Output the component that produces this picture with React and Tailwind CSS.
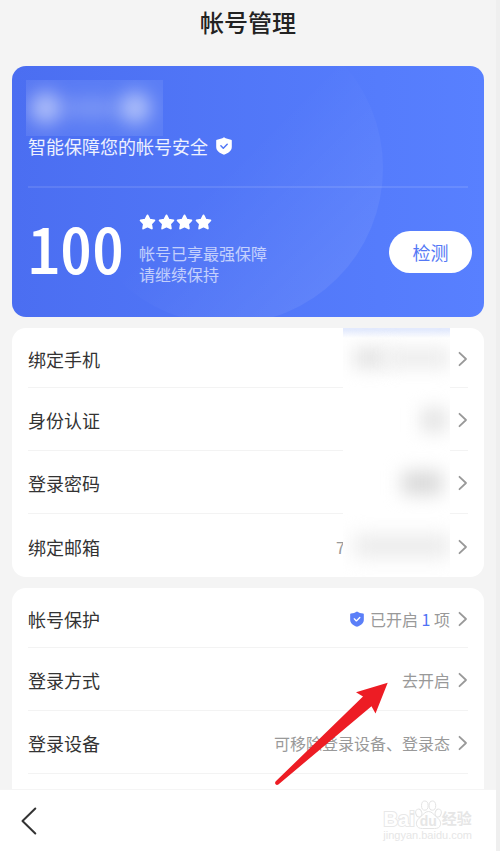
import React from "react";

const ChevronRight = () => (
  <svg viewBox="0 0 10 16" className="h-4 w-2.5 shrink-0" fill="none" aria-hidden="true">
    <path
      d="M1.5 1.8 8 8l-6.5 6.2"
      stroke="#999999"
      strokeWidth="1.8"
      strokeLinecap="round"
      strokeLinejoin="round"
    />
  </svg>
);

const Shield = ({ className, fill, check }) => (
  <svg viewBox="0 0 16 18" className={className} aria-hidden="true">
    <path
      d="M8 .3c2.2 1.4 4.4 2.1 7 2.4.5.1.8.4.8.9v6.2c0 4-3 6.3-7.8 8-4.8-1.7-7.8-4-7.8-8V3.6c0-.5.3-.8.8-.9C3.6 2.4 5.8 1.7 8 .3Z"
      fill={fill}
    />
    <path
      d="m4.9 8.8 2.4 2.4 3.9-3.9"
      fill="none"
      stroke={check}
      strokeWidth="1.5"
      strokeLinecap="round"
      strokeLinejoin="round"
    />
  </svg>
);

const Star = () => (
  <svg viewBox="0 0 18 17" className="h-4 w-[17px]" aria-hidden="true">
    <path
      d="m9 1.5 2.3 4.5 5 .8-3.5 3.6.8 5L9 13.2l-4.6 2.2.8-5L1.700 6.800l5-.8L9 1.500Z"
      fill="#fff"
      stroke="#fff"
      strokeWidth="2"
      strokeLinejoin="round"
    />
  </svg>
);

// Hidden personal value, smeared out in front of the chevron
const Masked = ({ children, glow }) => (
  <span
    className={`relative -mt-0.5 -mb-px flex w-[107px] items-center justify-end self-stretch overflow-hidden ${
      glow ? "bg-linear-to-b from-[#e3eafd] from-[2px] to-white to-[10px]" : "bg-white"
    }`}
  >
    {children}
  </span>
);

const Row = ({ label, children }) => (
  <li className="mx-4 h-[63px] border-b border-[#f3f3f3] first:h-[60px]">
    <a href="#" className="flex h-full items-center pt-0.5">
      <span className="flex-1 text-lg text-[#333333]">{label}</span>
      <span className="flex items-center gap-2 self-stretch text-base text-[#999999]">
        {children}
        <ChevronRight />
      </span>
    </a>
  </li>
);

const Watermark = () => (
  <div className="mr-6 flex flex-col items-center font-['Liberation_Sans','Noto_Sans_CJK_SC',sans-serif] text-[#e6e6e6]">
    <div className="flex items-end">
      <span className="text-xl leading-5 font-bold text-white [-webkit-text-stroke:2px_#e8e8e8] [paint-order:stroke_fill]">
        Bai
      </span>
      <span className="relative flex h-[29px] w-[27px] items-end justify-center">
        <svg
          viewBox="0 0 27 29"
          className="absolute inset-0 h-full w-full"
          fill="#fff"
          stroke="#e4e4e4"
          aria-hidden="true"
        >
          <ellipse cx="3.8" cy="13" rx="3" ry="4" transform="rotate(-15 3.8 13)" />
          <ellipse cx="9.8" cy="5.6" rx="3.3" ry="4.6" />
          <ellipse cx="17.4" cy="5.6" rx="3.3" ry="4.6" />
          <ellipse cx="23.2" cy="13" rx="3" ry="4" transform="rotate(15 23.2 13)" />
          <path d="M13.5 11.500c3.500 0 5 3 7.500 5 3 2.500 5 4.500 4.500 8-.5 3.200-3 4-6 4h-12c-3 0-5.500-.8-6-4-.5-3.500 1.500-5.500 4.500-8 2.500-2 4-5 7.500-5Z" />
        </svg>
        <span className="relative text-sm leading-4 font-bold">du</span>
      </span>
      <span className="text-[15px] leading-5 font-bold">经验</span>
    </div>
    <span className="text-[11px] leading-3">jingyan.baidu.com</span>
  </div>
);

const App = () => {
  return (
    <div className="min-h-screen bg-[#efefef] pr-1 font-['Noto_Sans_CJK_SC',sans-serif]">
      <div className="flex min-h-screen flex-col bg-[#f4f4f4]">
        <header className="h-[66px] pt-1">
          <h1 className="text-center text-2xl leading-9 font-medium text-[#222222]">帐号管理</h1>
        </header>

        <main className="flex flex-1 flex-col px-3">
          {/* Security score */}
          <section className="relative overflow-hidden rounded-[14px] bg-linear-to-r from-[#4b6ef1] to-[#5880ff] px-4 pt-3.5 text-white">
            <div className="absolute -top-[54px] right-[101px] h-[312px] w-[312px] rounded-full bg-linear-to-br from-transparent from-50% to-white/10" />

            <div className="relative">
              <div className="-ml-0.5 flex h-14 w-[137px] items-center justify-between overflow-hidden bg-white/8 px-1">
                <span className="h-8 w-8 rounded-full bg-white/50 blur-[9px]" />
                <span className="h-5 w-12 bg-white/20 blur-[9px]" />
                <span className="mr-2 h-8 w-8 rounded-full bg-white/50 blur-[9px]" />
              </div>
              <p className="flex items-center gap-2 text-lg leading-5 text-white/90">
                智能保障您的帐号安全
                <Shield className="h-[18px] w-4" fill="#fff" check="#5277f7" />
              </p>

              <div className="mt-[30px] h-0.5 bg-white/10" />

              <div className="-mr-1 flex items-center pt-[26px] pb-8">
                <p className="mb-2 w-[111px] text-[64px] leading-[62px] font-medium [font-feature-settings:'hwid']">
                  100
                </p>
                <div className="flex-1">
                  <div className="flex w-[73px] justify-between">
                    <Star />
                    <Star />
                    <Star />
                    <Star />
                  </div>
                  <p className="mt-[13px] text-base leading-[21px] text-white/65">
                    帐号已享最强保障
                    <br />
                    请继续保持
                  </p>
                </div>
                <button
                  type="button"
                  className="mt-1 h-[42px] w-[83px] rounded-full bg-white text-lg text-[#5578f5]"
                >
                  检测
                </button>
              </div>
            </div>
          </section>

          {/* Bound credentials */}
          <ul className="mt-[11px] overflow-hidden rounded-[14px] bg-white [&>li:last-child]:border-b-0">
            <Row label="绑定手机">
              <Masked glow>
                <span className="h-5 w-8 bg-[#e2e2e2] blur-[9px]" />
                <span className="h-5 w-16 bg-[#ececec] blur-[9px]" />
              </Masked>
            </Row>
            <Row label="身份认证">
              <Masked>
                <span className="mr-1 h-6 w-6 bg-[#e2e2e2] blur-[9px]" />
              </Masked>
            </Row>
            <Row label="登录密码">
              <Masked>
                <span className="mr-2 h-6 w-10 bg-[#d9d9d9] blur-[9px]" />
              </Masked>
            </Row>
            <Row label="绑定邮箱">
              <span className="-mr-2.5">7</span>
              <Masked>
                <span className="h-5 w-24 bg-[#e8e8e8] blur-[10px]" />
              </Masked>
            </Row>
          </ul>

          {/* Protection and sign-in */}
          <div className="relative mt-[11px] flex-1 rounded-t-[14px] bg-white">
            <ul>
              <Row label="帐号保护">
                <Shield className="-mr-0.5 h-4 w-3.5" fill="#5b7ff8" check="#fff" />
                <span>
                  已开启 <span className="text-[#4e72f5]">1</span> 项
                </span>
              </Row>
              <Row label="登录方式">
                <span>去开启</span>
              </Row>
              <Row label="登录设备">
                <span>可移除登录设备、登录态</span>
              </Row>
            </ul>

            {/* Pointer to the sign-in options */}
            <svg
              viewBox="0 0 116 106"
              className="pointer-events-none absolute top-[93px] right-[94px] h-[106px] w-[116px]"
              aria-hidden="true"
            >
              <path
                d="M113.700 1.700 82 11.200l7 4.300L1.800 100.300c-1.800 2 .2 4.600 2.600 3.200L97.500 25.200l4 7.300 12.200-30.800Z"
                fill="#ed1c24"
              />
            </svg>
          </div>
        </main>

        <footer className="flex h-[62px] items-center justify-between border-t border-[#f5f5f5] bg-white">
          <button type="button" aria-label="返回" className="ml-5">
            <svg viewBox="0 0 18 30" className="h-[30px] w-[18px]" fill="none" aria-hidden="true">
              <path
                d="M15.300 2.500 2.500 15l12.800 12.500"
                stroke="#333333"
                strokeWidth="2"
                strokeLinecap="round"
                strokeLinejoin="round"
              />
            </svg>
          </button>
          <Watermark />
        </footer>
      </div>
    </div>
  );
};

export default App;
